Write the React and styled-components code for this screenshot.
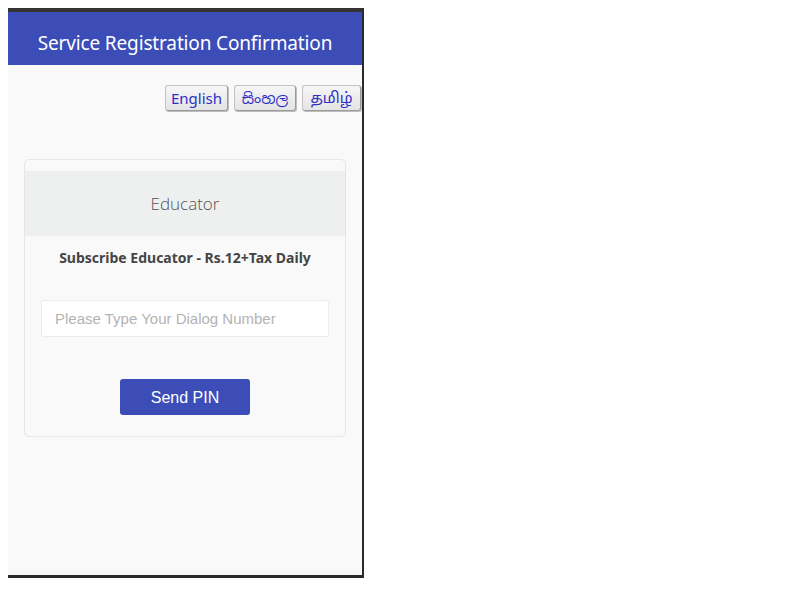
import React from "react";
import styled, { createGlobalStyle } from "styled-components";

const Global = createGlobalStyle`
  html, body { margin: 0; padding: 0; background: #ffffff; }
  body { margin: 8px; font-family: "Noto Sans", "Open Sans", sans-serif; }
  * { box-sizing: border-box; }
`;

const Frame = styled.div`
  width: 356px;
  height: 570px;
  background: #f9f9f9;
  border-top: 4px solid #333333;
  border-right: 2px solid #2a2a2a;
  border-bottom: 3px solid #2a2a2a;
  display: flex;
  flex-direction: column;
`;

const Header = styled.header`
  height: 53px;
  background: #3c4db8;
  color: #ffffff;
  display: flex;
  align-items: center;
  justify-content: center;
  font-family: "Noto Sans", sans-serif;
  font-size: 19px;
  letter-spacing: -0.15px;
  padding-top: 9px;
`;

const LangBar = styled.div`
  display: flex;
  justify-content: flex-end;
  gap: 6px;
  padding: 20px 1px 0 0;
`;

const LangButton = styled.button`
  height: 26px;
  padding: 0 6px;
  font-family: "Noto Sans", "Noto Sans Sinhala", "Noto Sans Tamil", sans-serif;
  font-size: 15px;
  color: #2f2fc8;
  background: linear-gradient(#f6f6f6, #e4e4e4);
  border: 1px solid #c4c4c4;
  border-right-color: #9a9a9a;
  border-bottom-color: #9a9a9a;
  border-radius: 3px;
  box-shadow: 1px 1px 0 #bdbdbd;
  display: flex;
  align-items: center;
  justify-content: center;
  width: ${(p) => p.$w}px;
`;

const Card = styled.section`
  margin: 48px 16px 0 16px;
  border: 1px solid #e6e6e6;
  border-radius: 5px;
  background: #f9f9f9;
  padding-top: 11px;
  display: flex;
  flex-direction: column;
  align-items: center;
  padding-bottom: 21px;
`;

const CardHeader = styled.div`
  align-self: stretch;
  height: 65px;
  background: #eeefef;
  display: flex;
  align-items: center;
  justify-content: center;
  font-family: "Open Sans", sans-serif;
  font-weight: 300;
  font-size: 17px;
  color: #555555;
`;

const Subtitle = styled.div`
  margin-top: 12px;
  font-family: "Noto Sans", sans-serif;
  font-weight: 700;
  font-size: 14px;
  color: #454545;
  line-height: 20px;
`;

const Input = styled.input`
  margin-top: 32px;
  width: 288px;
  height: 37px;
  background: #ffffff;
  border: 1px solid #ececec;
  border-radius: 2px;
  padding: 0 13px;
  font-family: "Liberation Sans", Arial, sans-serif;
  font-size: 15px;
  color: #333;
  outline: none;
  &::placeholder { color: #b3b3b3; }
`;

const SendButton = styled.button`
  margin-top: 42px;
  width: 130px;
  height: 36px;
  background: #3c4db8;
  color: #ffffff;
  border: none;
  border-radius: 3px;
  font-family: "Liberation Sans", Arial, sans-serif;
  font-size: 16px;
  padding-top: 2px;
`;

export default function App() {
  return (
    <>
      <Global />
      <Frame>
        <Header>Service Registration Confirmation</Header>
        <LangBar>
          <LangButton $w={63}>English</LangButton>
          <LangButton $w={62}>සිංහල</LangButton>
          <LangButton $w={59}>தமிழ்</LangButton>
        </LangBar>
        <Card>
          <CardHeader>Educator</CardHeader>
          <Subtitle>Subscribe Educator - Rs.12+Tax Daily</Subtitle>
          <Input placeholder="Please Type Your Dialog Number" />
          <SendButton>Send PIN</SendButton>
        </Card>
      </Frame>
    </>
  );
}
